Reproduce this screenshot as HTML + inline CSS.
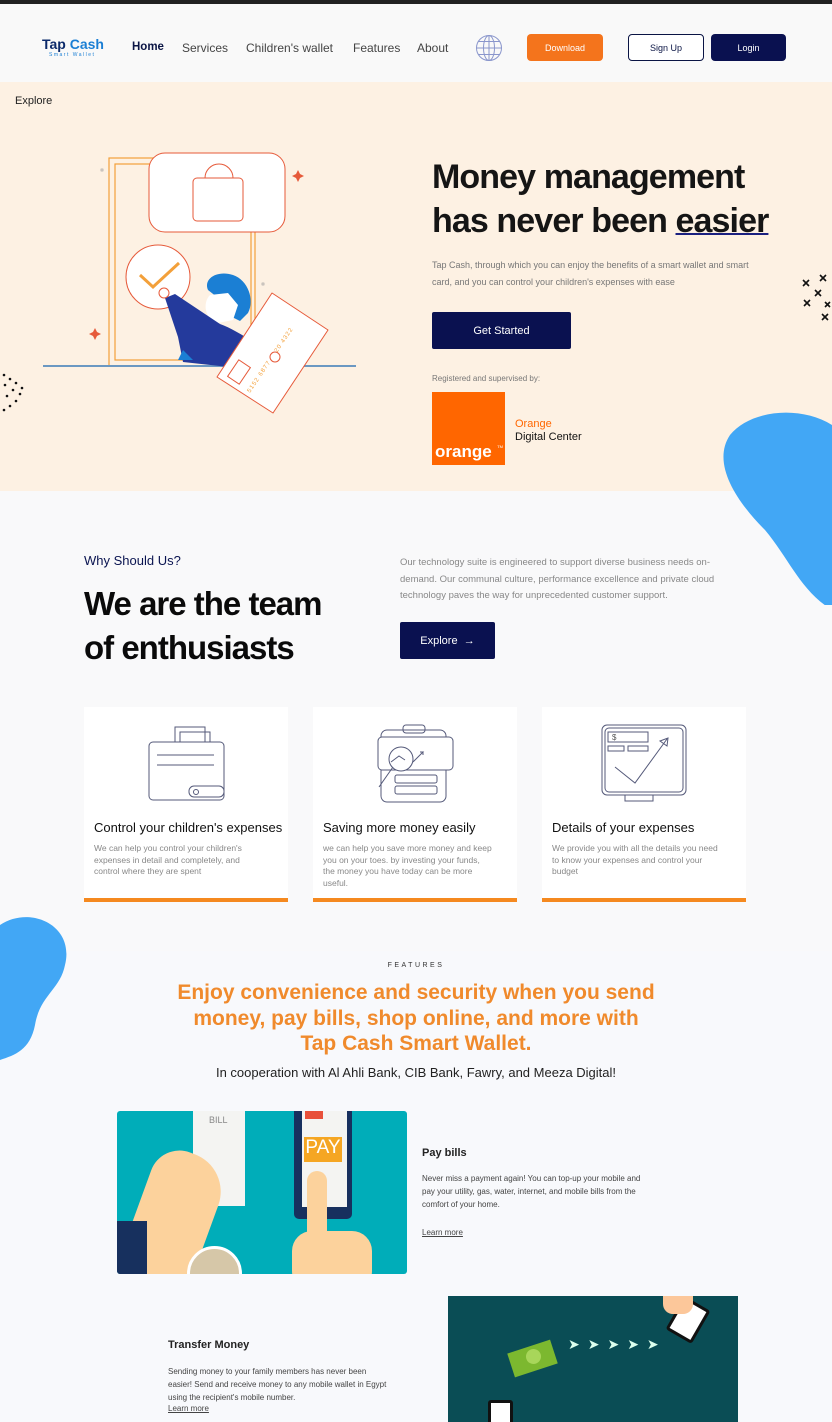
<!DOCTYPE html>
<html><head><meta charset="utf-8"><style>
*{margin:0;padding:0;box-sizing:border-box}
body{width:832px;height:1422px;position:relative;overflow:hidden;font-family:"Liberation Sans",sans-serif;background:#f8f9fc}
.a{position:absolute}
.nav a{position:absolute;top:41px;font-size:12px;color:#444}
.btn{position:absolute;display:flex;align-items:center;justify-content:center;font-size:9px;border-radius:4px}
.card{position:absolute;top:707px;width:204px;height:195px;background:#fff;border-bottom:4px solid #f5891f}
.card h3{position:absolute;left:10px;top:113px;font-size:13px;font-weight:normal;color:#111;white-space:nowrap}
.card p{position:absolute;left:10px;top:136px;width:170px;font-size:8.5px;line-height:11.5px;color:#888}
</style></head><body>
<div class="a" style="left:0;top:0;width:832px;height:4px;background:#222"></div>
<div class="a" style="left:0;top:4px;width:832px;height:78px;background:#f9f9f9"></div>
<div class="a" style="left:42px;top:36px;font-size:14px;font-weight:bold;color:#0c2a6b">Tap <span style="color:#1b7fd4">Cash</span></div>
<div class="a" style="left:49px;top:52px;font-size:5px;letter-spacing:1.5px;color:#1b7fd4">Smart Wallet</div>
<div class="nav">
<a style="left:132px;color:#0a1444;font-weight:bold;font-size:11.5px">Home</a>
<a style="left:182px">Services</a>
<a style="left:246px">Children's wallet</a>
<a style="left:353px">Features</a>
<a style="left:417px">About</a>
</div>
<svg class="a" style="left:475px;top:34px" width="28" height="28" viewBox="0 0 28 28" fill="none" stroke="#8a96cc" stroke-width="1"><circle cx="14" cy="14" r="12.5"/><ellipse cx="14" cy="14" rx="5.5" ry="12.5"/><path d="M14 1.5v25M1.5 14h25M3.5 7.5h21M3.5 20.5h21"/></svg>
<div class="btn" style="left:527px;top:34px;width:76px;height:27px;background:#f4741c;color:#fff">Download</div>
<div class="btn" style="left:628px;top:34px;width:76px;height:27px;border:1.5px solid #0a1444;color:#0a1444;background:#fff">Sign Up</div>
<div class="btn" style="left:711px;top:34px;width:75px;height:27px;background:#0a1150;color:#fff">Login</div>

<div class="a" style="left:0;top:82px;width:832px;height:409px;background:#fdf1e3"></div>
<div class="a" style="left:15px;top:95px;font-size:11px;color:#222">Explore</div>
<svg class="a" style="left:40px;top:130px" width="380" height="300" viewBox="0 0 380 300" fill="none">
<rect x="69" y="28" width="146" height="208" stroke="#f3a03a" stroke-width="1.2"/>
<rect x="75" y="34" width="136" height="196" stroke="#f3a03a" stroke-width="1.2"/>
<line x1="3" y1="236" x2="316" y2="236" stroke="#6b98c2" stroke-width="2"/>
<rect x="109" y="23" width="136" height="79" rx="16" fill="#fff" stroke="#e65a3a"/>
<rect x="153" y="48" width="50" height="43" rx="4" stroke="#e65a3a"/>
<path d="M165 48a13 13 0 0 1 28 0" stroke="#e65a3a"/>
<circle cx="118" cy="147" r="32" fill="#fff" stroke="#e65a3a"/>
<path d="M100 145l13 12 26-24" stroke="#f3a03a" stroke-width="3"/>
<path d="M168 160c-5-12 10-20 25-15 15 5 22 25 15 38l-8 8-10-5-8-15z" fill="#1b7fd4"/>
<path d="M170 165c-8 8-5 25 8 28l15-3 5-15-10-12z" fill="#fff"/>
<path d="M125 168l10-4 45 30c15 5 35 20 55 30l5 8-12 2-25-8-5 12-55-6-5-25z" fill="#243a9c"/>
<path d="M140 230h-2l5-10 10 10z" fill="#1b7fd4"/>
<polygon points="232,163 288,200 233,283 177,247" fill="#fff" stroke="#e65a3a" stroke-linejoin="round"/>
<rect x="192" y="232" width="14" height="20" transform="rotate(34 199 242)" stroke="#e65a3a"/>
<text x="0" y="0" font-size="6" fill="#f3a03a" transform="translate(210 263) rotate(-56)" letter-spacing="1">5152 6877 9320 4322</text>
<circle cx="235" cy="227" r="5" fill="#fff" stroke="#e65a3a"/>
<circle cx="124" cy="163" r="5" fill="#fff" stroke="#e65a3a"/>
<path d="M258 40l2 4 4 2-4 2-2 4-2-4-4-2 4-2z M55 198l2 4 4 2-4 2-2 4-2-4-4-2 4-2z" fill="#e65a3a"/>
<rect x="61" y="39" width="2" height="2" stroke="#999" stroke-width=".6"/>
<rect x="222" y="153" width="2" height="2" stroke="#999" stroke-width=".6"/>
</svg>
<svg class="a" style="left:0;top:370px" width="30" height="45"><g fill="#111"><circle cx="4" cy="5" r="1.3"/><circle cx="10" cy="9" r="1.3"/><circle cx="16" cy="13" r="1.3"/><circle cx="5" cy="15" r="1.3"/><circle cx="13" cy="20" r="1.3"/><circle cx="20" cy="24" r="1.3"/><circle cx="7" cy="26" r="1.3"/><circle cx="16" cy="31" r="1.3"/><circle cx="22" cy="18" r="1.3"/><circle cx="10" cy="36" r="1.3"/><circle cx="4" cy="40" r="1.3"/></g></svg>
<svg class="a" style="left:800px;top:272px" width="32" height="52" stroke="#111" stroke-width="1.6"><path d="M3 8l6 6M9 8l-6 6M20 3l6 6M26 3l-6 6M15 18l6 6M21 18l-6 6M4 28l6 6M10 28l-6 6M22 42l6 6M28 42l-6 6M25 30l5 5M30 30l-5 5"/></svg>

<div class="a" style="left:432px;top:155px;font-size:34px;line-height:44px;font-weight:bold;color:#151515;letter-spacing:-0.9px;white-space:nowrap">Money management<br>has never been <span style="text-decoration:underline;text-decoration-color:#1a2080;text-decoration-thickness:2px">easier</span></div>
<div class="a" style="left:432px;top:257px;width:320px;font-size:9px;line-height:16.5px;color:#777">Tap Cash, through which you can enjoy the benefits of a smart wallet and smart card, and you can control your children's expenses with ease</div>
<div class="btn" style="left:432px;top:312px;width:139px;height:37px;background:#0a1150;color:#fff;font-size:11px;border-radius:2px">Get Started</div>
<div class="a" style="left:432px;top:374px;font-size:8px;color:#777">Registered and supervised by:</div>
<div class="a" style="left:432px;top:392px;width:73px;height:73px;background:#ff6600"><span class="a" style="left:3px;bottom:3px;color:#fff;font-weight:bold;font-size:17px">orange</span><span class="a" style="right:2px;top:52px;color:#fff;font-size:4px">TM</span></div>
<div class="a" style="left:515px;top:418px;font-size:11px;line-height:12.5px;color:#ff6600">Orange<br><span style="color:#111">Digital Center</span></div>
<svg class="a" style="left:720px;top:405px" width="112" height="200"><path d="M112 20C80 0 30 5 10 30c-20 30 10 70 35 95 25 30 35 60 67 80z" fill="#42a7f5"/></svg>

<div class="a" style="left:0;top:491px;width:832px;height:460px;background:#f9f9fa;z-index:-1"></div>
<div class="a" style="left:84px;top:553px;font-size:13px;color:#0a1450">Why Should Us?</div>
<div class="a" style="left:84px;top:582px;font-size:33px;line-height:44px;font-weight:bold;color:#0a0a0a;letter-spacing:-1px">We are the team<br>of enthusiasts</div>
<div class="a" style="left:400px;top:555px;width:325px;font-size:9.5px;line-height:16.5px;color:#888">Our technology suite is engineered to support diverse business needs on-demand. Our communal culture, performance excellence and private cloud technology paves the way for unprecedented customer support.</div>
<div class="btn" style="left:400px;top:622px;width:95px;height:37px;background:#0a1150;color:#fff;font-size:11px;border-radius:2px">Explore &nbsp;→</div>

<div class="card" style="left:84px">
<svg class="a" style="left:60px;top:15px" width="85" height="85" fill="none" stroke="#555a7a" stroke-width="1"><rect x="31" y="5" width="30" height="25"/><rect x="36" y="10" width="30" height="22"/><rect x="5" y="20" width="75" height="58" rx="4" fill="#fff"/><path d="M13 33h57M13 43h57"/><rect x="45" y="64" width="35" height="11" rx="5"/><circle cx="52" cy="70" r="2.5"/></svg>
<h3>Control your children's expenses</h3><p>We can help you control your children's expenses in detail and completely, and control where they are spent</p></div>
<div class="card" style="left:313px">
<svg class="a" style="left:60px;top:15px" width="85" height="85" fill="none" stroke="#555a7a" stroke-width="1"><rect x="8" y="8" width="65" height="72" rx="6"/><rect x="30" y="3" width="22" height="8" rx="3"/><rect x="5" y="15" width="75" height="33" rx="4" fill="#fff"/><circle cx="28" cy="37" r="12" fill="#fff"/><path d="M20 45l-14 20M18 40l8-6 6 4M40 40l10-10-3 0M50 30v3"/><rect x="22" y="53" width="42" height="8" rx="2"/><rect x="22" y="64" width="42" height="8" rx="2"/></svg>
<h3>Saving more money easily</h3><p>we can help you save more money and keep you on your toes. by investing your funds, the money you have today can be more useful.</p></div>
<div class="card" style="left:542px">
<svg class="a" style="left:58px;top:15px" width="90" height="85" fill="none" stroke="#555a7a" stroke-width="1"><rect x="2" y="3" width="84" height="70" rx="5"/><rect x="5" y="6" width="78" height="64" rx="4"/><rect x="25" y="73" width="28" height="6"/><rect x="8" y="10" width="40" height="10"/><text x="12" y="18" font-size="8" fill="#555" stroke="none">$</text><rect x="8" y="24" width="16" height="5"/><rect x="28" y="24" width="20" height="5"/><path d="M15 45l20 16 32-44M60 19l8-3-1 8z"/></svg>
<h3>Details of your expenses</h3><p>We provide you with all the details you need to know your expenses and control your budget</p></div>

<svg class="a" style="left:0;top:915px" width="70" height="145"><path d="M0 10c30-20 75 0 65 40-5 25-25 30-30 60-5 25-20 30-35 35z" fill="#42a7f5"/></svg>

<div class="a" style="left:0;top:962px;width:832px;text-align:center;font-size:7px;letter-spacing:2.5px;color:#333">FEATURES</div>
<div class="a" style="left:0;top:980px;width:832px;text-align:center;font-size:21px;line-height:25.5px;font-weight:bold;color:#f08a2c">Enjoy convenience and security when you send<br>money, pay bills, shop online, and more with<br>Tap Cash Smart Wallet.</div>
<div class="a" style="left:0;top:1065px;width:832px;text-align:center;font-size:13px;color:#222">In cooperation with Al Ahli Bank, CIB Bank, Fawry, and Meeza Digital!</div>

<div class="a" style="left:117px;top:1111px;width:290px;height:163px;background:#00adb9;border-radius:3px;overflow:hidden">
<div class="a" style="left:76px;top:0;width:52px;height:95px;background:#f4f4f2"><span class="a" style="left:16px;top:4px;font-size:9px;color:#888">BILL</span></div>
<div class="a" style="left:177px;top:0;width:58px;height:108px;background:#17305e;border-radius:0 0 5px 5px"></div>
<div class="a" style="left:185px;top:0;width:45px;height:96px;background:#f4f4f2"></div>
<div class="a" style="left:188px;top:0;width:18px;height:8px;background:#e8503a"></div>
<div class="a" style="left:187px;top:26px;width:38px;height:25px;background:#f5a623;color:#fff;font-size:19px;text-align:center">PAY</div>
<div class="a" style="left:20px;top:40px;width:75px;height:130px;background:#fcd29c;border-radius:30px 40px 0 0;transform:rotate(20deg)"></div>
<div class="a" style="left:0;top:110px;width:30px;height:60px;background:#17305e"></div>
<div class="a" style="left:190px;top:60px;width:20px;height:110px;background:#fcd29c;border-radius:10px"></div>
<div class="a" style="left:175px;top:120px;width:80px;height:60px;background:#fcd29c;border-radius:20px"></div>
<div class="a" style="left:70px;top:135px;width:55px;height:55px;background:#d6c7a8;border-radius:50%;border:3px solid #fff"></div>
</div>
<div class="a" style="left:422px;top:1147px;font-size:11px;font-weight:bold;color:#222">Pay bills</div>
<div class="a" style="left:422px;top:1172px;width:232px;font-size:8px;line-height:13px;color:#444">Never miss a payment again! You can top-up your mobile and pay your utility, gas, water, internet, and mobile bills from the comfort of your home.</div>
<div class="a" style="left:422px;top:1228px;font-size:8px;color:#444;text-decoration:underline">Learn more</div>

<div class="a" style="left:168px;top:1339px;font-size:11px;font-weight:bold;color:#222">Transfer Money</div>
<div class="a" style="left:168px;top:1365px;width:222px;font-size:8px;line-height:13px;color:#444">Sending money to your family members has never been easier! Send and receive money to any mobile wallet in Egypt using the recipient's mobile number.</div>
<div class="a" style="left:168px;top:1404px;font-size:8px;color:#444;text-decoration:underline">Learn more</div>

<div class="a" style="left:448px;top:1296px;width:290px;height:126px;background:#0a4d55;overflow:hidden">
<div class="a" style="left:62px;top:50px;width:45px;height:25px;background:#7cb82f;transform:rotate(-18deg)"></div>
<div class="a" style="left:78px;top:53px;width:15px;height:15px;border-radius:50%;background:#a8d65a;transform:rotate(-18deg)"></div>
<div class="a" style="left:120px;top:40px;font-size:14px;color:#dfe;letter-spacing:8px">➤➤➤➤➤</div>
<div class="a" style="left:225px;top:5px;width:30px;height:38px;background:#fff;border:3px solid #111;border-radius:3px;transform:rotate(30deg)"></div>
<div class="a" style="left:215px;top:0;width:30px;height:18px;background:#fcc79a;border-radius:0 0 10px 10px"></div>
<div class="a" style="left:40px;top:104px;width:25px;height:30px;background:#fff;border:3px solid #111;border-radius:3px"></div>
</div>
</body></html>
